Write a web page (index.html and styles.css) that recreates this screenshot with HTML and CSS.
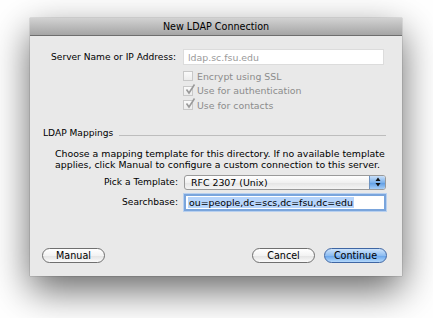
FILE: index.html
```html
<!DOCTYPE html>
<html>
<head>
<meta charset="utf-8">
<link rel="stylesheet" href="styles.css">
</head>
<body>
<div class="stage">
  <div class="window">
    <div class="titlebar">New LDAP Connection</div>
    <div class="content">
      <div class="grid server">
        <div class="label">Server Name or IP Address:</div>
        <div class="field disabled">ldap.sc.fsu.edu</div>
      </div>
      <div class="checks">
        <div class="check"><span class="box"></span>Encrypt using SSL</div>
        <div class="check"><span class="box"><svg viewBox="0 0 12 12" width="12" height="12"><path d="M2.5 5.5 L5 9 L10.5 0.5" fill="none" stroke="#9a9a9a" stroke-width="1.6"/></svg></span>Use for authentication</div>
        <div class="check"><span class="box"><svg viewBox="0 0 12 12" width="12" height="12"><path d="M2.5 5.5 L5 9 L10.5 0.5" fill="none" stroke="#9a9a9a" stroke-width="1.6"/></svg></span>Use for contacts</div>
      </div>
      <div class="section">
        <span class="section-title">LDAP Mappings</span>
        <span class="rule"></span>
      </div>
      <p class="desc">Choose a mapping template for this directory. If no available template applies, click Manual to configure a custom connection to this server.</p>
      <div class="grid2 pick">
        <div class="label">Pick a Template:</div>
        <div class="popup"><span class="popup-text">RFC 2307 (Unix)</span><span class="arrows"><svg viewBox="0 0 8 12" width="8" height="12"><path d="M4 1.5 L6.5 5 L1.5 5 Z M4 10.5 L6.5 7 L1.5 7 Z" fill="#111"/></svg></span></div>
      </div>
      <div class="grid2 search">
        <div class="label">Searchbase:</div>
        <div class="field focus"><span class="sel">ou=people,dc=scs,dc=fsu,dc=edu</span></div>
      </div>
      <div class="buttons">
        <button class="btn">Manual</button>
        <span class="spacer"></span>
        <button class="btn">Cancel</button>
        <button class="btn default">Continue</button>
      </div>
    </div>
  </div>
</div>
</body>
</html>
```

FILE: styles.css
```css
html, body {
  margin: 0;
  padding: 0;
  background: #ffffff;
}
body {
  font-family: "DejaVu Sans", "Liberation Sans", sans-serif;
  font-size: 9.1px;
  color: #000;
}
.stage {
  padding: 18px 0 0 30px;
  height: 300px;
}
.window {
  width: 372px;
  height: 258px;
  background: #e9e9e9;
  box-shadow: 0 14px 36px rgba(0,0,0,0.6), 0 0 1px rgba(0,0,0,0.5);
  display: flex;
  flex-direction: column;
}
.titlebar {
  height: 17px;
  line-height: 17px;
  text-align: center;
  background: linear-gradient(#d2d2d2, #a5a5a5);
  border-bottom: 1px solid #6e6e6e;
  font-size: 9.6px;
  color: #000;
  flex: none;
}
.content {
  padding: 13px 0 0 0;
  display: flex;
  flex-direction: column;
  flex: 1;
}
.grid {
  display: grid;
  grid-template-columns: 146px 201px;
  column-gap: 7px;
  align-items: center;
}
.grid2 {
  display: grid;
  grid-template-columns: 148px 202px;
  column-gap: 6px;
  align-items: center;
}
.label {
  text-align: right;
}
.field {
  height: 16px;
  line-height: 16px;
  background: #fff;
  box-sizing: border-box;
  padding-left: 4px;
  white-space: nowrap;
}
.field.disabled {
  color: #9a9a9a;
  border: 1px solid #dcdcdc;
  font-size: 9.4px;
}
.checks {
  margin: 5px 0 0 153px;
  display: flex;
  flex-direction: column;
  gap: 2px;
  color: #8c8c8c;
  font-size: 9.4px;
}
.check {
  display: flex;
  align-items: center;
  height: 12.5px;
}
.box {
  width: 10px;
  height: 10px;
  box-sizing: border-box;
  border: 1px solid #c8c8c8;
  background: linear-gradient(#fafafa, #ececec);
  margin-right: 4px;
  position: relative;
  flex: none;
}
.box svg {
  position: absolute;
  left: 0;
  top: -3px;
}
.section {
  display: flex;
  align-items: center;
  margin: 16px 16px 0 13px;
}
.section-title {
  margin-right: 6px;
}
.rule {
  flex: 1;
  height: 1px;
  background: #bdbdbd;
  margin-top: 6px;
}
.desc {
  margin: 10px 0 0 25px;
  line-height: 11px;
  width: 330px;
  font-size: 9.4px;
}
.pick {
  margin-top: 5px;
}
.popup {
  height: 15px;
  box-sizing: border-box;
  border: 1px solid #9a9a9a;
  border-radius: 3px;
  background: linear-gradient(#ffffff, #f1f1f1 50%, #e4e4e4 51%, #f5f5f5);
  display: flex;
  align-items: center;
  overflow: hidden;
  font-size: 9.4px;
}
.popup-text {
  flex: 1;
  padding-left: 6px;
}
.arrows {
  width: 15px;
  height: 100%;
  background: linear-gradient(#c9e0fa, #7db1ea 50%, #5a9ae3 51%, #a6cdf6);
  border-left: 1px solid #6f93c0;
  display: flex;
  align-items: center;
  justify-content: center;
}
.search {
  margin-top: 4px;
}
.field.focus {
  height: 17px;
  line-height: 13px;
  border: 2px solid #7aa5dc;
  box-shadow: 0 0 0 1px #b8d0ef;
  padding-left: 2px;
  color: #000;
  font-size: 9.4px;
}
.sel {
  background: #b6d4fb;
  padding: 0 1px;
}
.buttons {
  margin: auto 15px 13px 12px;
  display: flex;
  align-items: center;
  gap: 9px;
}
.spacer {
  flex: 1;
}
.btn {
  font-family: inherit;
  font-size: 9.6px;
  width: 63px;
  height: 15px;
  padding: 0;
  border: 1px solid #6f6f6f;
  border-radius: 8px;
  background: linear-gradient(#ffffff, #f3f3f3 50%, #e2e2e2 51%, #fafafa);
  color: #000;
  line-height: 13px;
}
.btn.default {
  border-color: #3f66a3;
  background: linear-gradient(#cde3fb, #8ebdf1 50%, #63a2ea 51%, #b4d8fb);
}
```
